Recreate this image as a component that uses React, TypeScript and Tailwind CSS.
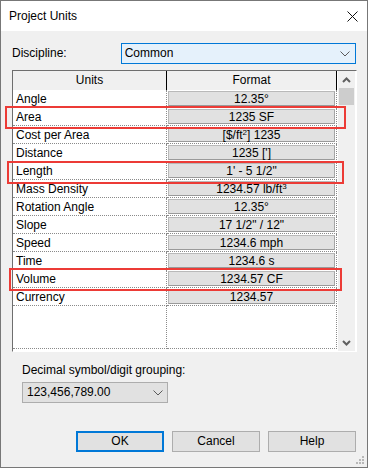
import React from 'react';

const rows: { name: string; format: React.ReactNode }[] = [
  { name: 'Angle', format: '12.35°' },
  { name: 'Area', format: '1235 SF' },
  { name: 'Cost per Area', format: <>[$/ft<sup className="text-[8px]">2</sup>] 1235</> },
  { name: 'Distance', format: "1235 [']" },
  { name: 'Length', format: '1\' - 5 1/2"' },
  { name: 'Mass Density', format: <>1234.57 lb/ft<sup className="text-[8px]">3</sup></> },
  { name: 'Rotation Angle', format: '12.35°' },
  { name: 'Slope', format: '17 1/2" / 12"' },
  { name: 'Speed', format: '1234.6 mph' },
  { name: 'Time', format: '1234.6 s' },
  { name: 'Volume', format: '1234.57 CF' },
  { name: 'Currency', format: '1234.57' },
];

function Chevron({ className }: { className?: string }) {
  return (
    <svg width="10" height="6" viewBox="0 0 10 6" className={className}>
      <polyline points="0.5,0.5 5,5 9.5,0.5" fill="none" stroke="#5a5a5a" strokeWidth="1" />
    </svg>
  );
}

function Highlight({ className }: { className: string }) {
  return <div className={`absolute border-2 border-[#ec3b36] pointer-events-none ${className}`} />;
}

export default function App() {
  return (
    <div className="relative w-[368px] h-[468px] bg-[#f0f0f0] border border-[#777777] flex flex-col text-[12px] leading-[15px] text-black font-['Liberation_Sans',Arial,sans-serif]">
      {/* Title bar */}
      <div className="h-[30px] bg-white flex items-center justify-between pl-[8px] pr-[9px] shrink-0">
        <span>Project Units</span>
        <svg width="11" height="11" viewBox="0 0 11 11">
          <path d="M0.5 0.5 L10.5 10.5 M10.5 0.5 L0.5 10.5" stroke="#111" strokeWidth="1" />
        </svg>
      </div>

      <div className="flex flex-col px-[11px]">
        {/* Discipline */}
        <div className="mt-[12px] flex items-center h-[21px]">
          <span className="w-[109px]">Discipline:</span>
          <div className="w-[236px] h-[21px] border border-[#0078d7] bg-[#e5f1fb] flex items-center justify-between pl-[3px] pr-[5px]">
            <span>Common</span>
            <Chevron />
          </div>
        </div>

        {/* Table */}
        <div className="mt-[6px] w-[345px] h-[282px] border-l border-t border-[#6e6e6e] border-r-white border-b-white border-r border-b flex bg-white">
          <div className="w-[324px] flex flex-col">
            <div className="h-[19px] flex bg-[#f0f0f0] shrink-0">
              <div className="w-[154px] border-r border-black flex items-center justify-center">Units</div>
              <div className="w-[170px] border-r border-black flex items-center justify-center">Format</div>
            </div>
            {rows.map((r) => (
              <div key={r.name} className="h-[18px] flex shrink-0">
                <div className="w-[154px] border-r border-b border-dotted border-[#8a8a8a] flex items-center pl-[3px] pt-[2px]">
                  {r.name}
                </div>
                <div className="w-[170px] border-r border-b border-dotted border-[#8a8a8a] pl-[1px] pr-[1px] pt-[1px]">
                  <div className="h-[15px] bg-[#e1e1e1] border border-[#b9b9b9] border-b-[#9a9a9a] border-r-[#a5a5a5] flex items-center justify-center">
                    <span className="leading-[13px] pt-[1px]">{r.format}</span>
                  </div>
                </div>
              </div>
            ))}
            <div className="flex h-[43px] shrink-0">
              <div className="w-[154px] border-r border-b border-dotted border-[#8a8a8a]" />
              <div className="w-[170px] border-r border-b border-dotted border-[#8a8a8a]" />
            </div>
          </div>
          <div className="w-[1px]" />
          <div className="w-[17px] bg-[#f0f0f0] flex flex-col">
            <div className="h-[17px] flex items-center justify-center">
              <svg width="9" height="6" viewBox="0 0 9 6">
                <polyline points="1,5 4.5,1.5 8,5" fill="none" stroke="#606060" strokeWidth="2" />
              </svg>
            </div>
            <div className="h-[17px] mx-[1px] bg-[#cdcdcd]" />
            <div className="flex-1" />
            <div className="h-[17px] flex items-center justify-center">
              <svg width="9" height="6" viewBox="0 0 9 6">
                <polyline points="1,1 4.5,4.5 8,1" fill="none" stroke="#606060" strokeWidth="2" />
              </svg>
            </div>
          </div>
        </div>

        {/* Decimal grouping */}
        <div className="mt-[11px] ml-[10px]">Decimal symbol/digit grouping:</div>
        <div className="mt-[4px] ml-[10px] w-[146px] h-[21px] bg-[#e1e1e1] border border-[#adadad] flex items-center justify-between pl-[4px] pr-[4px]">
          <span>123,456,789.00</span>
          <Chevron />
        </div>

        {/* Buttons */}
        <div className="mt-[28px] flex justify-end gap-[8px]">
          <div className="w-[88px] h-[21px] border-2 border-[#0078d7] bg-[#e1e1e1] flex items-center justify-center">OK</div>
          <div className="w-[88px] h-[21px] border border-[#adadad] bg-[#e1e1e1] flex items-center justify-center">Cancel</div>
          <div className="w-[88px] h-[21px] border border-[#adadad] bg-[#e1e1e1] flex items-center justify-center">Help</div>
        </div>
      </div>

      {/* Resize grip */}
      <svg width="9" height="9" viewBox="0 0 9 9" className="absolute right-[2px] bottom-[2px]">
        <rect x="6" y="0" width="2" height="2" fill="#b8b8b8" />
        <rect x="3" y="3" width="2" height="2" fill="#b8b8b8" />
        <rect x="6" y="3" width="2" height="2" fill="#b8b8b8" />
        <rect x="0" y="6" width="2" height="2" fill="#b8b8b8" />
        <rect x="3" y="6" width="2" height="2" fill="#b8b8b8" />
        <rect x="6" y="6" width="2" height="2" fill="#b8b8b8" />
      </svg>

      {/* Annotation boxes */}
      <Highlight className="left-[4px] top-[105px] w-[341px] h-[23px]" />
      <Highlight className="left-[6px] top-[160px] w-[337px] h-[23px]" />
      <Highlight className="left-[8px] top-[267px] w-[333px] h-[23px]" />
    </div>
  );
}
